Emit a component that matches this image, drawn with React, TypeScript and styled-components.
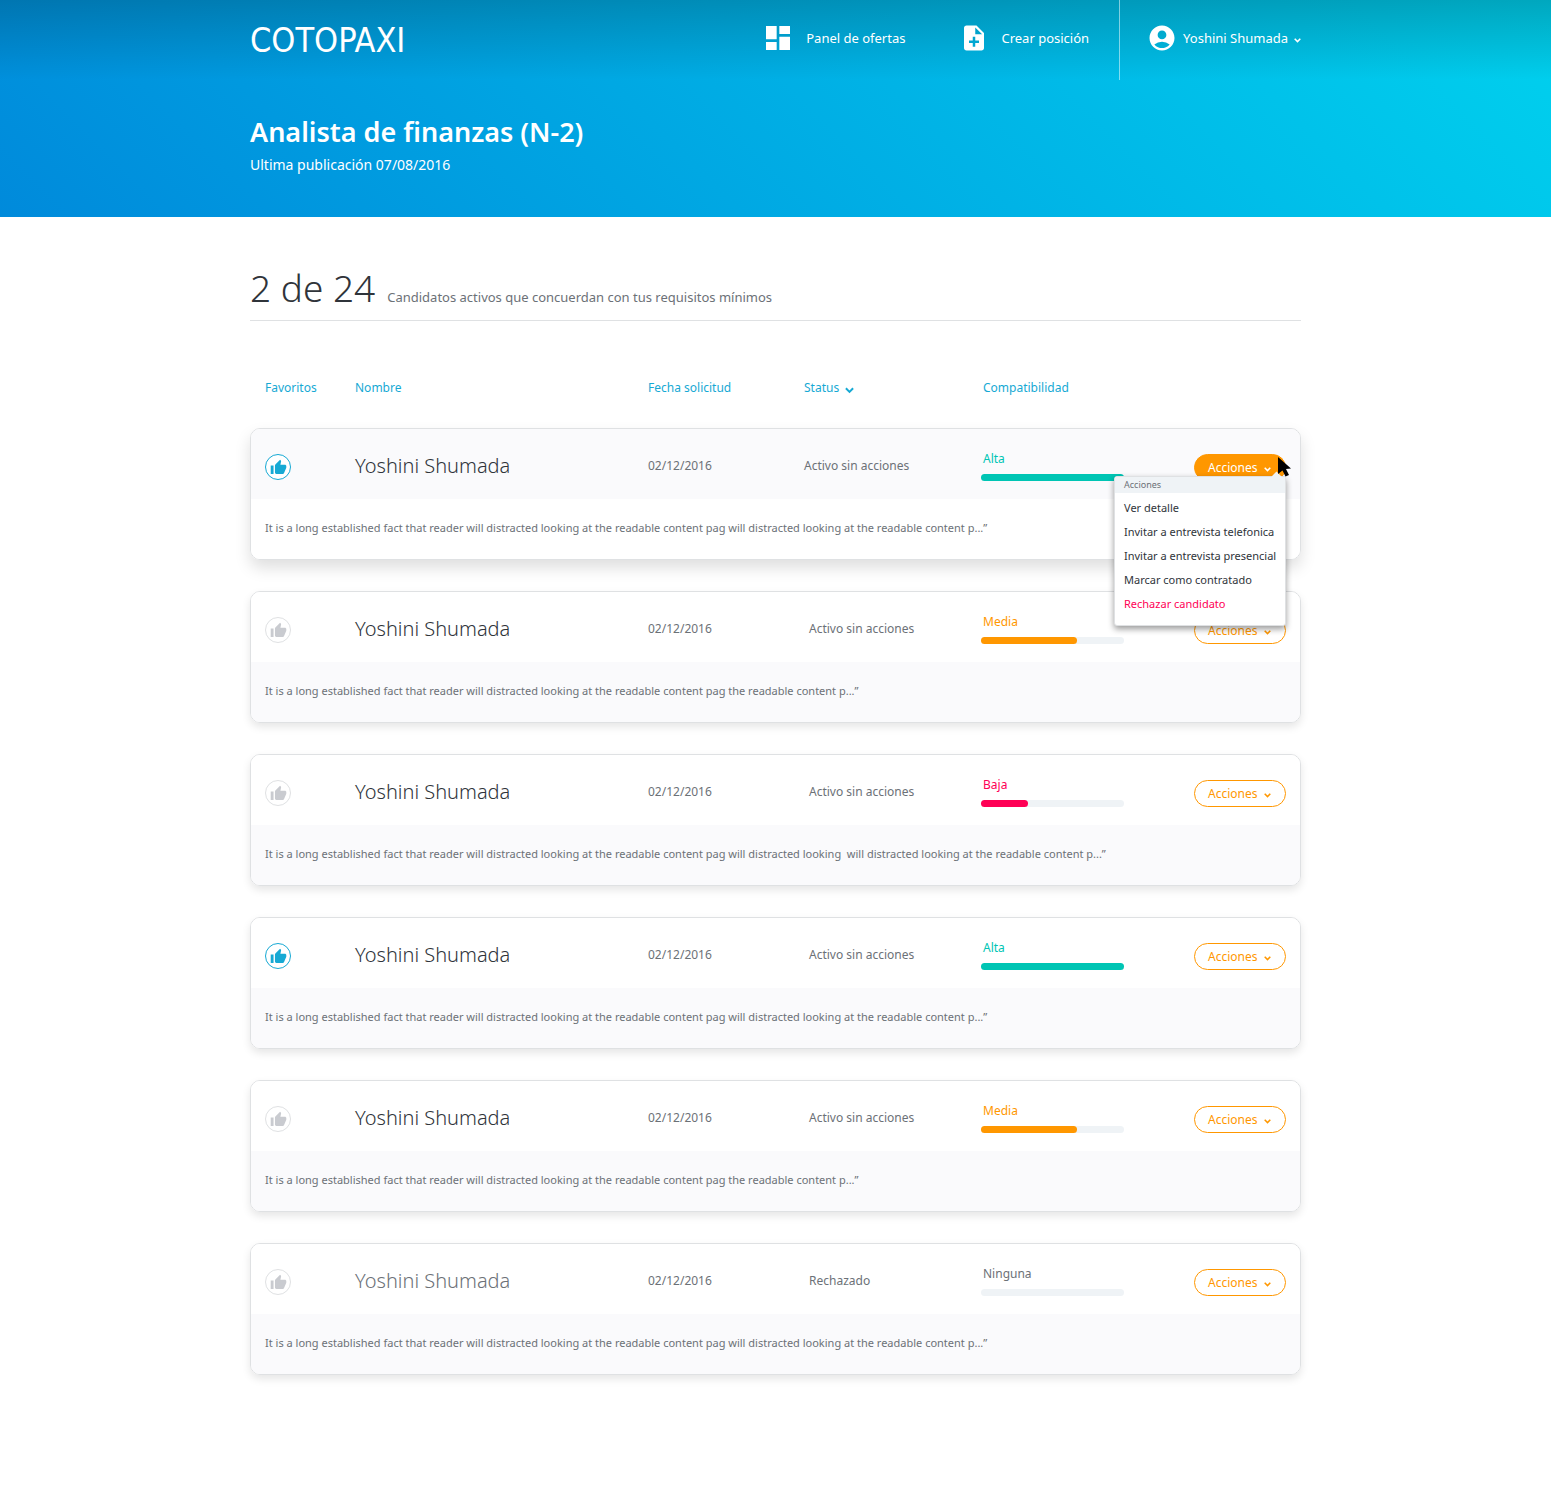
import React from 'react';
import styled, { createGlobalStyle } from 'styled-components';
import { MdAccountCircle, MdDashboard, MdNoteAdd, MdThumbUp } from 'react-icons/md';

const color = {
  cyan: '#16a9d4',
  orange: '#ff9700',
  teal: '#00c5b4',
  pink: '#ff0055',
  ink: '#2f343a',
  grey: '#6c7177',
  faded: '#c9cbd0',
  line: '#dfe1e3',
  panel: '#fafafc',
  track: '#eff3f6',
};

const COLUMNS = '90fr 293fr 156fr 177fr 213fr 92px';

const GlobalStyle = createGlobalStyle`
  *, *::before, *::after { box-sizing: border-box; }
  body {
    margin: 0;
    background: #fff;
    color: ${color.ink};
    font-family: 'Noto Sans', 'Open Sans', sans-serif;
    font-size: 12px;
    line-height: 16px;
  }
  button { font: inherit; color: inherit; cursor: pointer; }
`;

const Container = styled.div`
  width: 100%;
  max-width: 1051px;
  margin: 0 auto;
`;

const Header = styled.header`
  min-height: 217px;
  color: #fff;
  background:
    linear-gradient(to bottom, rgba(0, 0, 0, 0.2), rgba(0, 0, 0, 0) 80px),
    linear-gradient(45deg, #008adb, #00d1ee);
`;

const TopBar = styled.div`
  display: flex;
  align-items: stretch;
  justify-content: space-between;
  height: 80px;
`;

const Logo = styled.a`
  align-self: center;
  color: #fff;
  font-family: 'DejaVu Sans Condensed', 'DejaVu Sans', sans-serif;
  font-size: 34px;
  line-height: 40px;
  text-decoration: none;
`;

const Nav = styled.nav`
  display: flex;
  align-items: stretch;
  font-size: 13px;
`;

const NavLink = styled.a`
  display: flex;
  align-items: center;
  gap: 12px;
  height: 76px;
  margin-right: 54px;
  color: #fff;
  text-decoration: none;

  &:last-of-type { margin-right: 30px; }
`;

const UserMenu = styled.div`
  display: flex;
  align-items: flex-start;
  padding-left: 27px;
  border-left: 1px solid rgba(255, 255, 255, 0.5);
`;

const UserButton = styled.button`
  display: flex;
  align-items: center;
  gap: 6px;
  height: 76px;
  padding: 0;
  border: 0;
  background: none;
`;

const Intro = styled.div`
  padding-top: 34px;
`;

const Title = styled.h1`
  margin: 0;
  font-size: 27px;
  font-weight: 600;
  line-height: 36px;
`;

const Published = styled.p`
  margin: 5px 0 0;
  font-size: 14px;
  line-height: 20px;
`;

const Summary = styled.div`
  display: flex;
  align-items: baseline;
  gap: 12px;
  padding: 43px 0 4px;
  border-bottom: 1px solid ${color.line};
`;

const Count = styled.h2`
  margin: 0;
  font-size: 37px;
  font-weight: 300;
  line-height: 56px;
`;

const CountNote = styled.p`
  margin: 0;
  color: ${color.grey};
  font-size: 13px;
`;

const Table = styled.table`
  display: block;
`;

const Head = styled.thead`
  display: block;
`;

const HeadRow = styled.tr`
  display: grid;
  grid-template-columns: ${COLUMNS};
  padding: 59px 15px 32px;
`;

const HeadCell = styled.th<{ $inset?: boolean }>`
  padding: 0 0 0 ${p => (p.$inset ? 2 : 0)}px;
  color: ${color.cyan};
  font-weight: 400;
  text-align: left;
`;

const SortButton = styled.button`
  display: flex;
  align-items: center;
  gap: 6px;
  padding: 0;
  border: 0;
  background: none;
`;

const Card = styled.tbody<{ $active?: boolean }>`
  display: block;
  margin-bottom: 31px;
  border: 1px solid ${color.line};
  border-radius: 10px;
  box-shadow: ${p => (p.$active ? '0 8px 16px rgba(0, 0, 0, 0.13)' : '0 4px 8px rgba(0, 0, 0, 0.1)')};
`;

const MainRow = styled.tr<{ $active?: boolean }>`
  display: grid;
  grid-template-columns: ${COLUMNS};
  align-items: center;
  height: 70px;
  padding: 4px 14px 0;
  border-radius: 9px 9px 0 0;
  background: ${p => (p.$active ? color.panel : '#fff')};
`;

const Cell = styled.td`
  padding: 0;
  color: ${color.grey};
`;

const StatusCell = styled(Cell)<{ $active?: boolean }>`
  padding-left: ${p => (p.$active ? 0 : 5)}px;
`;

const NameCell = styled(Cell)<{ $muted?: boolean }>`
  color: ${p => (p.$muted ? color.grey : color.ink)};
  font-size: 20px;
  font-weight: 300;
  line-height: 28px;
`;

const FavouriteButton = styled.button<{ $on?: boolean }>`
  display: flex;
  align-items: center;
  justify-content: center;
  width: 26px;
  height: 26px;
  margin-top: 2px;
  padding: 0;
  border: 1px solid ${p => (p.$on ? color.cyan : color.line)};
  border-radius: 50%;
  background: #fff;
  color: ${p => (p.$on ? color.cyan : color.faded)};
`;

const Match = styled.div`
  width: 143px;
`;

const MatchLabel = styled.div<{ $tone: string }>`
  padding: 0 0 7px 2px;
  color: ${p => p.$tone};
`;

const Track = styled.div`
  height: 7px;
  border-radius: 4px;
  background: ${color.track};
`;

const Fill = styled.div<{ $tone: string }>`
  height: 100%;
  border-radius: 4px;
  background: ${p => p.$tone};
`;

const ActionsCell = styled(Cell)`
  position: relative;
  padding-top: 2px;
`;

const ActionsButton = styled.button<{ $active?: boolean }>`
  display: flex;
  align-items: center;
  gap: 7px;
  width: 92px;
  height: 27px;
  padding: 1px 13px 0;
  border: 1px solid ${color.orange};
  border-radius: 14px;
  background: ${p => (p.$active ? color.orange : '#fff')};
  color: ${p => (p.$active ? '#fff' : color.orange)};
`;

const CommentRow = styled.tr<{ $active?: boolean }>`
  display: block;
  height: 60px;
  padding: 21px 14px 0;
  border-radius: 0 0 9px 9px;
  background: ${p => (p.$active ? '#fff' : color.panel)};
`;

const Comment = styled.td`
  display: block;
  padding: 0;
  color: ${color.grey};
  font-size: 11px;
  white-space: pre-wrap;
`;

const Menu = styled.div`
  position: absolute;
  z-index: 2;
  top: 24px;
  right: 0;
  width: 172px;
  padding-bottom: 9px;
  border: 1px solid ${color.line};
  border-radius: 3px;
  background: #fff;
  box-shadow: 0 3px 6px rgba(0, 0, 0, 0.4);
  color: ${color.ink};
  font-size: 11px;

  &::before {
    content: '';
    position: absolute;
    top: -4px;
    right: 5px;
    width: 7px;
    height: 7px;
    background: ${color.track};
    transform: rotate(45deg);
  }
`;

const MenuTitle = styled.div`
  padding: 0 9px;
  margin-bottom: 3px;
  background: ${color.track};
  color: ${color.grey};
  font-size: 9px;
  line-height: 16px;
`;

const MenuItem = styled.button<{ $danger?: boolean }>`
  display: block;
  width: 100%;
  height: 24px;
  padding: 0 9px;
  border: 0;
  background: none;
  color: ${p => (p.$danger ? color.pink : color.ink)};
  text-align: left;
  white-space: nowrap;
`;

const Pointer = styled.svg`
  position: absolute;
  z-index: 3;
  top: 5px;
  right: -5px;
`;

const ChevronIcon = styled.svg`
  flex: none;
  margin-top: 4px;
`;

function Chevron({ size = 7 }: { size?: number }) {
  return (
    <ChevronIcon width={size} height={size} viewBox="0 0 10 10" aria-hidden="true">
      <path d="M1 2.5 5 6.5 9 2.5" fill="none" stroke="currentColor" strokeWidth="2.2" />
    </ChevronIcon>
  );
}

type Level = 'Alta' | 'Media' | 'Baja' | 'Ninguna';

const LEVELS: Record<Level, { tone: string; value: number }> = {
  Alta: { tone: color.teal, value: 100 },
  Media: { tone: color.orange, value: 67 },
  Baja: { tone: color.pink, value: 33 },
  Ninguna: { tone: color.grey, value: 0 },
};

interface Candidate {
  favourite: boolean;
  status: string;
  level: Level;
  comment: string;
  rejected?: boolean;
}

const START = 'It is a long established fact that reader will distracted looking at the readable content pag ';
const LONG = `${START}will distracted looking at the readable content p...”`;
const SHORT = `${START}the readable content p...”`;
const LONGEST = `${START}will distracted looking  will distracted looking at the readable content p...”`;

const CANDIDATES: Candidate[] = [
  { favourite: true, status: 'Activo sin acciones', level: 'Alta', comment: LONG },
  { favourite: false, status: 'Activo sin acciones', level: 'Media', comment: SHORT },
  { favourite: false, status: 'Activo sin acciones', level: 'Baja', comment: LONGEST },
  { favourite: true, status: 'Activo sin acciones', level: 'Alta', comment: LONG },
  { favourite: false, status: 'Activo sin acciones', level: 'Media', comment: SHORT },
  { favourite: false, status: 'Rechazado', level: 'Ninguna', comment: LONG, rejected: true },
];

const MENU_ITEMS = [
  'Ver detalle',
  'Invitar a entrevista telefonica',
  'Invitar a entrevista presencial',
  'Marcar como contratado',
];

function ActionsMenu() {
  return (
    <Menu role="menu" aria-label="Acciones">
      <MenuTitle>Acciones</MenuTitle>
      {MENU_ITEMS.map(item => (
        <MenuItem key={item} type="button" role="menuitem">{item}</MenuItem>
      ))}
      <MenuItem type="button" role="menuitem" $danger>Rechazar candidato</MenuItem>
    </Menu>
  );
}

function CandidateCard({ candidate, active }: { candidate: Candidate; active: boolean }) {
  const { tone, value } = LEVELS[candidate.level];
  return (
    <Card $active={active}>
      <MainRow $active={active}>
        <Cell>
          <FavouriteButton type="button" $on={candidate.favourite} aria-pressed={candidate.favourite} aria-label="Favorito">
            <MdThumbUp size={17} />
          </FavouriteButton>
        </Cell>
        <NameCell $muted={candidate.rejected}>Yoshini Shumada</NameCell>
        <Cell>02/12/2016</Cell>
        <StatusCell $active={active}>{candidate.status}</StatusCell>
        <Cell>
          <Match>
            <MatchLabel $tone={tone}>{candidate.level}</MatchLabel>
            <Track role="progressbar" aria-label="Compatibilidad" aria-valuenow={value}>
              <Fill $tone={tone} style={{ width: `${value}%` }} />
            </Track>
          </Match>
        </Cell>
        <ActionsCell>
          <ActionsButton type="button" $active={active} aria-haspopup="menu" aria-expanded={active}>
            Acciones
            <Chevron />
          </ActionsButton>
          {active && <ActionsMenu />}
          {active && (
            <Pointer width="13" height="20" viewBox="0 0 13 20" aria-hidden="true">
              <path d="M0 0 13 11.5 8 12 11 18 7.5 19.5 4.5 13.5 0 17Z" fill="#000" />
            </Pointer>
          )}
        </ActionsCell>
      </MainRow>
      <CommentRow $active={active}>
        <Comment colSpan={6}>{candidate.comment}</Comment>
      </CommentRow>
    </Card>
  );
}

export default function App() {
  return (
    <>
      <GlobalStyle />
      <Header>
        <Container>
          <TopBar>
            <Logo href="#">COTOPAXI</Logo>
            <Nav>
              <NavLink href="#ofertas"><MdDashboard size={32} />Panel de ofertas</NavLink>
              <NavLink href="#crear"><MdNoteAdd size={30} />Crear posición</NavLink>
              <UserMenu>
                <UserButton type="button">
                  <MdAccountCircle size={30} />
                  Yoshini Shumada
                  <Chevron />
                </UserButton>
              </UserMenu>
            </Nav>
          </TopBar>
          <Intro>
            <Title>Analista de finanzas (N-2)</Title>
            <Published>Ultima publicación 07/08/2016</Published>
          </Intro>
        </Container>
      </Header>
      <Container as="main">
        <Summary>
          <Count>2 de 24</Count>
          <CountNote>Candidatos activos que concuerdan con tus requisitos mínimos</CountNote>
        </Summary>
        <Table>
          <Head>
            <HeadRow>
              <HeadCell>Favoritos</HeadCell>
              <HeadCell>Nombre</HeadCell>
              <HeadCell>Fecha solicitud</HeadCell>
              <HeadCell>
                <SortButton type="button">Status<Chevron size={9} /></SortButton>
              </HeadCell>
              <HeadCell $inset>Compatibilidad</HeadCell>
            </HeadRow>
          </Head>
          {CANDIDATES.map((candidate, index) => (
            <CandidateCard key={index} candidate={candidate} active={index === 0} />
          ))}
        </Table>
      </Container>
    </>
  );
}
